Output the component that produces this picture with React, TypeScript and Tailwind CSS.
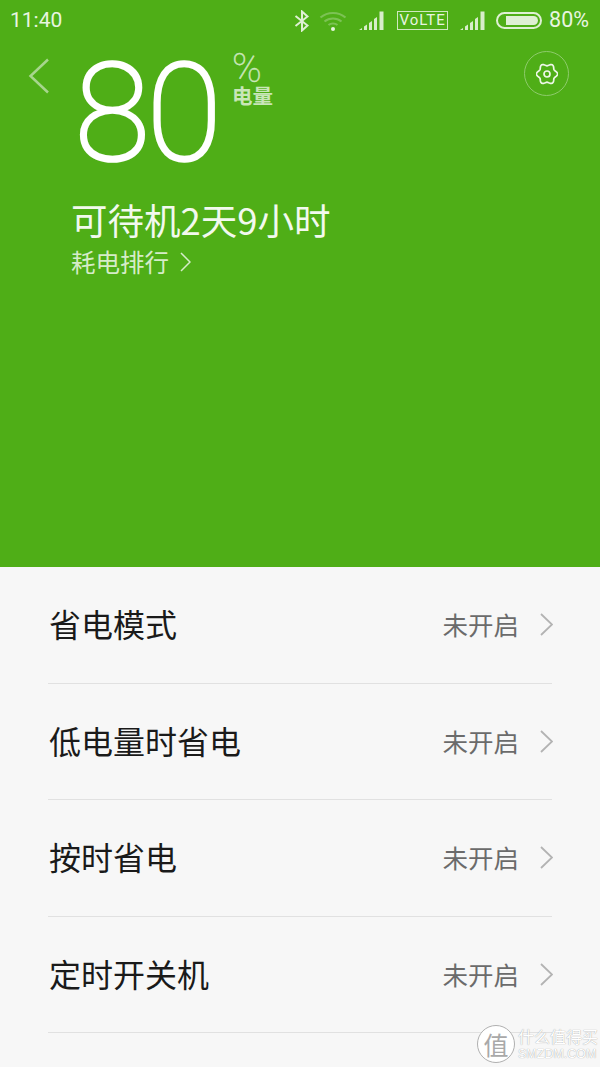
import React from "react";

const font = { fontFamily: '"Noto Sans CJK SC", "Noto Sans", sans-serif' };

const rows = ["省电模式", "低电量时省电", "按时省电", "定时开关机"];

// 六瓣齿轮轮廓
const gearPath = Array.from({ length: 72 }, (_, i) => {
  const a = (i / 72) * Math.PI * 2;
  const r = 9.4 + 1.2 * Math.cos(6 * a);
  return `${i === 0 ? "M" : "L"}${(11 + r * Math.cos(a)).toFixed(2)} ${(11 + r * Math.sin(a)).toFixed(2)}`;
}).join("") + "Z";

const Signal = () => (
  <svg width="26" height="20" viewBox="0 0 26 20" fill="#dff0d4">
    <path d="M0 19l3-2v2zM5 15.500l3-2v5.500h-3zM10 12l3-2v9h-3zM15 8l3-2v13h-3zM20.500 0.500h4v18.500h-4z" opacity="0.95" />
  </svg>
);

const Bluetooth = () => (
  <svg width="16" height="22" viewBox="0 0 16 22" fill="none" stroke="#dff0d4" strokeWidth="2">
    <path d="M1.500 6l12 9.500-5.500 5v-19l5.500 5-12 9.500" />
  </svg>
);

const Wifi = () => (
  <svg width="28" height="20" viewBox="0 0 28 20" fill="none" stroke="#7cc254" strokeWidth="2.200">
    <path d="M1.500 6.500c7-6 18-6 25 0" />
    <path d="M5.500 10.500c5-4 12-4 17 0" />
    <path d="M9.500 14c2.500-2 6.500-2 9 0" />
    <circle cx="14" cy="18" r="2" fill="#e8f5e0" stroke="none" />
  </svg>
);

const Battery = () => (
  <div className="flex h-[17px] w-[46px] items-center rounded-full border-2 border-[#dff0d4] p-[2px] pl-[8px]">
    <div className="h-full w-full rounded-r-full bg-[#dff0d4]" />
  </div>
);

const Gear = () => (
  <svg width="22" height="22" viewBox="0 0 22 22" fill="none" stroke="#eef7e8" strokeWidth="1.700">
    <path d={gearPath} />
    <circle cx="11" cy="11" r="3" />
  </svg>
);

const Chevron = ({ w, h, color, sw }: { w: number; h: number; color: string; sw: number }) => (
  <svg width={w} height={h} viewBox={`0 0 ${w} ${h}`} fill="none" stroke={color} strokeWidth={sw}>
    <path d={`M1 1l${w - 2} ${(h - 2) / 2}L1 ${h - 1}`} />
  </svg>
);

export default function App() {
  return (
    <div className="relative h-[1067px] w-[600px] overflow-hidden bg-[#f7f7f7]" style={font}>
      {/* 绿色头部 */}
      <div className="h-[567px] bg-[#4fae17]">
        <div className="flex h-[41px] items-center justify-between pl-[10px] pr-[11px] text-[#e8f5e0]">
          <span className="text-[21px] font-['Roboto']">11:40</span>
          <div className="flex items-center">
            <Bluetooth />
            <div className="ml-[9px]"><Wifi /></div>
            <div className="ml-[12px]"><Signal /></div>
            <div className="ml-[12px] flex h-[19px] w-[51px] items-center justify-center border-[1.500px] border-[#cfe8c0] text-[15px] leading-none tracking-[1px] font-['Roboto']">VoLTE</div>
            <div className="ml-[12px]"><Signal /></div>
            <div className="ml-[10px]"><Battery /></div>
            <span className="ml-[7px] text-[21.500px] font-['Roboto']">80%</span>
          </div>
        </div>

        <div className="flex items-start pl-[28px] pr-[31px]">
          <div className="mt-[17px]">
            <svg width="22" height="36" viewBox="0 0 22 36" fill="none" stroke="#a7d68d" strokeWidth="2.500">
              <path d="M20 1.500L2.500 18 20 34.500" />
            </svg>
          </div>
          <div className="ml-[25px] mt-[-7px] h-[140px] w-[160px] text-[136px] font-thin leading-[160px] tracking-[-2.500px] text-white [-webkit-text-stroke:3.500px_white] font-['Roboto']">80</div>
          <div className="ml-[-3px] mt-[13px] flex flex-col text-[#c9e6b8]">
            <span className="h-[29px] text-[40px] font-thin leading-[29px] [-webkit-text-stroke:0.500px_#c9e6b8] font-['Roboto']">%</span>
            <span className="text-[20.500px] font-bold leading-[24px]">电量</span>
          </div>
          <div className="ml-auto mt-[10px] flex h-[45px] w-[45px] items-center justify-center rounded-full border border-[#8ecb6c]">
            <Gear />
          </div>
        </div>

        <div className="pl-[71px] pt-[23px]">
          <div className="text-[36.500px] leading-[46px] text-[#f2f9ee]">可待机2天9小时</div>
          <div className="flex items-center text-[24.500px] leading-[38px] text-[#d5ecc8]">
            耗电排行
            <span className="ml-[11px]"><Chevron w={11} h={20} color="#d5ecc8" sw={1.500} /></span>
          </div>
        </div>
      </div>

      {/* 设置列表 */}
      <div className="px-[48px]">
        {rows.map((label) => (
          <div key={label} className="flex h-[116.500px] items-center justify-between border-b border-[#e1e1e1]">
            <span className="mb-[3px] ml-[1px] text-[32px] text-[#1a1a1a]">{label}</span>
            <div className="mr-[-1px] flex items-center">
              <span className="mb-[1px] text-[25.500px] text-[#6b6b6b]">未开启</span>
              <span className="ml-[21px]"><Chevron w={13} h={23} color="#b3b3b3" sw={1.800} /></span>
            </div>
          </div>
        ))}
      </div>

      {/* 水印 */}
      <div className="absolute left-[477px] top-[1025px] flex items-center whitespace-nowrap">
        <div className="flex h-[38px] w-[38px] items-center justify-center rounded-full border border-[#b0b0b0] bg-white text-[25px] leading-none text-[#a9a9a9]">值</div>
        <div className="ml-[3px] flex flex-col">
          <span className="text-[16px] leading-[20px] text-white [text-shadow:0_0_1px_#8a8a8a]">什么值得买</span>
          <span className="text-[12.500px] leading-[16px] text-white [text-shadow:0_0_1px_#8a8a8a] font-['Liberation_Sans']">SMZDM.COM</span>
        </div>
      </div>
    </div>
  );
}
